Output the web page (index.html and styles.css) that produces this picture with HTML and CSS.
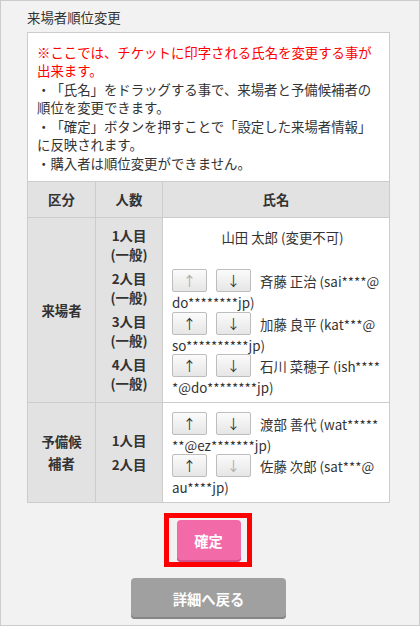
FILE: index.html
```html
<!DOCTYPE html>
<html lang="ja">
<head>
<meta charset="utf-8">
<title>来場者順位変更</title>
<link rel="stylesheet" href="styles.css">
</head>
<body>
<div class="page">
  <h1 class="title">来場者順位変更</h1>
  <div class="panel">
    <div class="notes">
      <p class="warn">※ここでは、チケットに印字される氏名を変更する事が出来ます。</p>
      <p>・「氏名」をドラッグする事で、来場者と予備候補者の順位を変更できます。</p>
      <p>・「確定」ボタンを押すことで「設定した来場者情報」に反映されます。</p>
      <p>・購入者は順位変更ができません。</p>
    </div>
    <table class="order">
      <colgroup><col class="col-kind"><col class="col-num"><col></colgroup>
      <thead>
        <tr><th>区分</th><th>人数</th><th>氏名</th></tr>
      </thead>
      <tbody>
        <tr>
          <th class="kind">来場者</th>
          <td class="nums">
            <div class="num">1人目<br>(一般)</div>
            <div class="num">2人目<br>(一般)</div>
            <div class="num">3人目<br>(一般)</div>
            <div class="num">4人目<br>(一般)</div>
          </td>
          <td class="names">
            <div class="name fixed">山田 太郎 (変更不可)</div>
            <div class="name"><button class="mv" disabled>↑</button><button class="mv">↓</button>斉藤 正治 (sai****@do********jp)</div>
            <div class="name"><button class="mv">↑</button><button class="mv">↓</button>加藤 良平 (kat***@so**********jp)</div>
            <div class="name"><button class="mv">↑</button><button class="mv">↓</button>石川 菜穂子 (ish*****@do********jp)</div>
          </td>
        </tr>
        <tr>
          <th class="kind">予備候補者</th>
          <td class="nums">
            <div class="num">1人目</div>
            <div class="num">2人目</div>
          </td>
          <td class="names">
            <div class="name"><button class="mv">↑</button><button class="mv">↓</button>渡部 善代 (wat*******@ez*******jp)</div>
            <div class="name"><button class="mv">↑</button><button class="mv" disabled>↓</button>佐藤 次郎 (sat***@au****jp)</div>
          </td>
        </tr>
      </tbody>
    </table>
  </div>
  <div class="actions">
    <div class="highlight"><button class="btn btn-confirm">確定</button></div>
    <button class="btn btn-back">詳細へ戻る</button>
  </div>
</div>
</body>
</html>
```
FILE: styles.css
```css
html, body {
  margin: 0;
  padding: 0;
  background: #ffffff;
}

.page {
  box-sizing: border-box;
  width: 420px;
  height: 626px;
  border: 1px solid #cccccc;
  background: #f2f2f2;
  padding: 7px 29px 0 26px;
  font-family: "Noto Sans CJK JP", "Noto Sans", sans-serif;
  font-size: 13.4px;
  color: #333333;
  text-spacing-trim: space-all;
}

.title {
  margin: 0 0 5px;
  font-size: 13.4px;
  font-weight: normal;
  line-height: 19px;
  color: #333333;
}

.panel {
  width: 363px;
}

.notes {
  background: #ffffff;
  border: 1px solid #cccccc;
  border-bottom: none;
  padding: 9.5px 9px 8.5px 9px;
  line-height: 18.5px;
  text-spacing-trim: space-all;
}

.notes p {
  margin: 0;
}

.notes .warn {
  color: #ff0000;
}

.order {
  width: 363px;
  border-collapse: collapse;
  table-layout: fixed;
  background: #ffffff;
}

.col-kind { width: 68px; }
.col-num { width: 67px; }

.order th,
.order td {
  border: 1px solid #cccccc;
  padding: 0 8px;
}

.order thead th {
  background: #e2e2e2;
  font-weight: bold;
  line-height: 19px;
  padding-top: 8px;
  padding-bottom: 8px;
  text-align: center;
}

.order .kind {
  background: #e2e2e2;
  font-weight: bold;
  line-height: 22px;
  text-align: center;
  vertical-align: middle;
}

.order .nums {
  background: #e2e2e2;
  font-weight: bold;
  text-align: center;
  vertical-align: middle;
}

.num {
  line-height: 19px;
}

.num + .num {
  margin-top: 5px;
}

.order .names {
  vertical-align: top;
  padding: 9px 8px 5px 9px;
  word-break: break-all;
}

.name {
  height: 42.5px;
  line-height: 21px;
}

.name.fixed {
  text-align: center;
  padding-left: 12px;
}

.mv {
  box-sizing: border-box;
  width: 35px;
  height: 23px;
  margin: 0 9px 0 0;
  padding: 0;
  border: 1px solid #bdbdbd;
  border-radius: 2px;
  background: linear-gradient(#fbfbfb, #e6e6e6);
  font-family: "Noto Sans CJK JP", sans-serif;
  font-size: 13.4px;
  line-height: 21px;
  color: #333333;
  vertical-align: 1px;
}

.mv:disabled {
  color: #aaaaaa;
}

.actions {
  display: flex;
  flex-direction: column;
  align-items: center;
  width: 363px;
  padding-top: 10px;
}

.highlight {
  border: 5px solid #ff0000;
  padding: 2px 6px 0 8px;
  margin-left: -2px;
  line-height: 0;
}

.btn {
  border: none;
  border-radius: 4px;
  color: #ffffff;
  font-family: "Noto Sans CJK JP", sans-serif;
  font-size: 14.3px;
  font-weight: bold;
  padding: 0;
}

.btn-confirm {
  width: 64px;
  height: 42px;
  background: #f26aa8;
  box-shadow: inset 0 -2px 0 #d2508b;
}

.btn-back {
  margin-top: 11.5px;
  width: 155px;
  height: 41px;
  background: #a0a0a0;
  box-shadow: inset 0 -2px 0 #858585;
}
```
